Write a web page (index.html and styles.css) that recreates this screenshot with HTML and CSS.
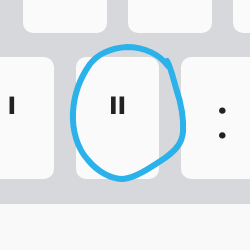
FILE: index.html
```html
<!DOCTYPE html>
<html>
<head>
<meta charset="utf-8">
<link rel="stylesheet" href="styles.css">
</head>
<body>
<div class="screen">
  <div class="keyboard">
    <div class="row row-top">
      <div class="key"></div>
      <div class="key"></div>
      <div class="key"></div>
    </div>
    <div class="row row-mid">
      <div class="key"><span class="glyph quote">'</span></div>
      <div class="key"><span class="glyph quote">"</span></div>
      <div class="key"><span class="glyph colon">:</span></div>
    </div>
  </div>
  <div class="bottom"></div>
  <svg class="annotation" width="250" height="250" viewBox="0 0 250 250">
    <path d="M168 66 C160 55 145 47 127 47 C110 48 97 55 90 64 C80 78 74 95 73 112 C72 130 77 148 88 160 C97 171 110 179 123 179 C135 178 150 168 165 158 C176 150 182 143 183 132 C184 118 180 100 176 88 C173 78 171 68 167 61"
      fill="none" stroke="#2bb2ea" stroke-width="6" stroke-linecap="round" stroke-linejoin="round"/>
  </svg>
</div>
</body>
</html>
```

FILE: styles.css
```css
html, body {
  margin: 0;
  padding: 0;
  background: #f9f9f9;
}
.screen {
  position: relative;
  width: 250px;
  height: 250px;
  overflow: hidden;
}
.keyboard {
  background: #d7d8dc;
  height: 204px;
  overflow: hidden;
  display: flex;
  flex-direction: column;
  gap: 24px;
}
.row {
  display: flex;
  gap: 21.5px;
  height: 122px;
  flex: none;
}
.row-top {
  margin-top: -89px;
  margin-left: 23px;
}
.row-mid {
  margin-left: -29.5px;
}
.key {
  flex: none;
  width: 83.5px;
  height: 122px;
  background: #fafafa;
  border-radius: 10px;
  display: flex;
  align-items: center;
  justify-content: center;
}
.glyph {
  color: #222;
  line-height: 1;
}
.quote {
  font-family: "DejaVu Sans", sans-serif;
  font-weight: bold;
  font-size: 64px;
  margin-top: 5px;
  transform: scaleX(0.62);
}
.colon {
  font-family: "Roboto", sans-serif;
  font-size: 58px;
}
.bottom {
  height: 46px;
  background: #f9f9f9;
}
.annotation {
  position: absolute;
  left: 0;
  top: 0;
}
```
